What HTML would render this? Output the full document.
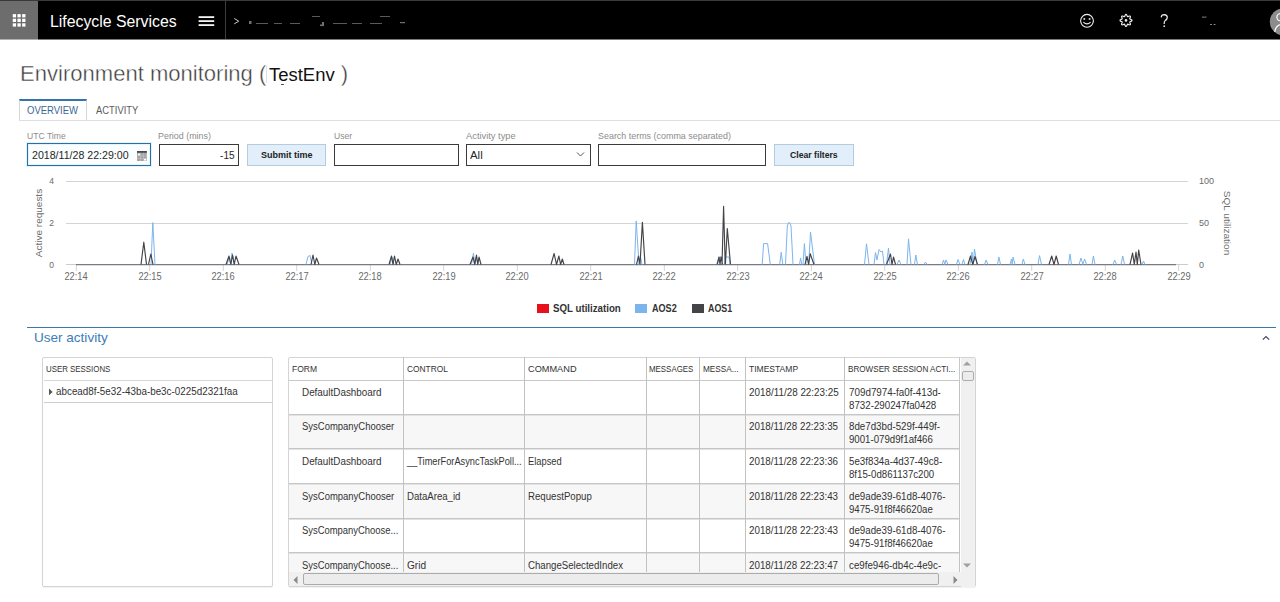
<!DOCTYPE html>
<html><head><meta charset="utf-8">
<style>
*{box-sizing:border-box;margin:0;padding:0}
html,body{width:1280px;height:602px;overflow:hidden;background:#fff;font-family:"Liberation Sans",sans-serif;position:relative}
.a{position:absolute;white-space:nowrap}
.t{line-height:1}
</style></head><body>
<div class="a" style="left:0.00px;top:0.00px;width:1280.00px;height:40.00px;background:#000"></div>
<div class="a" style="left:0.00px;top:0.00px;width:1280.00px;height:1.00px;background:#3a3a3a"></div>
<div class="a" style="left:0.00px;top:39.00px;width:1280.00px;height:1.00px;background:#7a7a7a"></div>
<div class="a" style="left:0.00px;top:1.00px;width:38.00px;height:38.00px;background:#6d6d6d"></div>
<div class="a" style="left:0.00px;top:39.00px;width:38.00px;height:1.00px;background:#b0b0b0"></div>
<svg class="a" style="left:0.00px;top:0.00px" width="38" height="39" viewBox="0 0 38 39"><g fill="#fff"><rect x="12.75" y="14.10" width="3.3" height="3.3"/><rect x="12.75" y="18.70" width="3.3" height="3.3"/><rect x="12.75" y="23.30" width="3.3" height="3.3"/><rect x="17.45" y="14.10" width="3.3" height="3.3"/><rect x="17.45" y="18.70" width="3.3" height="3.3"/><rect x="17.45" y="23.30" width="3.3" height="3.3"/><rect x="22.15" y="14.10" width="3.3" height="3.3"/><rect x="22.15" y="18.70" width="3.3" height="3.3"/><rect x="22.15" y="23.30" width="3.3" height="3.3"/></g></svg>
<svg class="a" style="left:198.00px;top:15.00px" width="17" height="12" viewBox="0 0 17 12"><g fill="#f2f2f2"><rect x="0.6" y="1.2" width="15.6" height="1.8"/><rect x="0.6" y="5.2" width="15.6" height="1.8"/><rect x="0.6" y="9.2" width="15.6" height="1.8"/></g></svg>
<div class="a" style="left:225.00px;top:1.00px;width:1.00px;height:38.00px;background:#3c3c3c"></div>
<svg class="a" style="left:233.00px;top:17.00px" width="8" height="9" viewBox="0 0 8 9"><path d="M1.2 1.5 L5.8 4.2 L1.2 6.9" fill="none" stroke="#c8c8c8" stroke-width="1"/></svg>
<svg class="a" style="left:245.00px;top:12.00px" width="170" height="16" viewBox="0 0 170 16"><g fill="#bdbdbd" opacity="0.6"><rect x="4.0" y="9.0" width="2.5" height="3.0"/><rect x="11.0" y="11.0" width="12.0" height="0.8"/><rect x="29.0" y="11.0" width="8.0" height="0.8"/><rect x="45.0" y="11.0" width="10.0" height="0.8"/><rect x="75.0" y="12.5" width="4.0" height="1.6"/><rect x="77.0" y="10.0" width="2.0" height="3.0"/><rect x="88.0" y="11.0" width="14.0" height="0.8"/><rect x="107.0" y="11.0" width="10.0" height="0.8"/><rect x="125.0" y="11.0" width="12.0" height="0.8"/><rect x="155.0" y="10.0" width="5.0" height="1.2"/><rect x="67.0" y="4.0" width="8.0" height="0.8"/><rect x="135.0" y="4.0" width="10.0" height="0.8"/></g></svg>
<svg class="a" style="left:1078.00px;top:12.00px" width="18" height="18" viewBox="0 0 18 18"><circle cx="9" cy="8.8" r="6.4" fill="none" stroke="#f0f0f0" stroke-width="1.1"/><circle cx="6.3" cy="6.9" r="0.95" fill="#f0f0f0"/><circle cx="11.6" cy="6.9" r="0.95" fill="#f0f0f0"/><path d="M5.4 10.2 Q9 13.6 12.6 10.2" fill="none" stroke="#f0f0f0" stroke-width="1.1"/></svg>
<svg class="a" style="left:1117.00px;top:12.00px" width="18" height="18" viewBox="0 0 18 18"><path d="M9.00 2.40 L9.38 2.54 L9.72 2.92 L9.99 3.45 L10.18 3.98 L10.36 4.40 L10.57 4.61 L10.87 4.61 L11.29 4.44 L11.81 4.20 L12.36 4.02 L12.87 3.98 L13.24 4.16 L13.42 4.53 L13.38 5.04 L13.20 5.59 L12.96 6.11 L12.79 6.53 L12.79 6.83 L13.00 7.04 L13.42 7.22 L13.95 7.41 L14.48 7.68 L14.86 8.02 L15.00 8.40 L14.86 8.78 L14.48 9.12 L13.95 9.39 L13.42 9.58 L13.00 9.76 L12.79 9.97 L12.79 10.27 L12.96 10.69 L13.20 11.21 L13.38 11.76 L13.42 12.27 L13.24 12.64 L12.87 12.82 L12.36 12.78 L11.81 12.60 L11.29 12.36 L10.87 12.19 L10.57 12.19 L10.36 12.40 L10.18 12.82 L9.99 13.35 L9.72 13.88 L9.38 14.26 L9.00 14.40 L8.62 14.26 L8.28 13.88 L8.01 13.35 L7.82 12.82 L7.64 12.40 L7.43 12.19 L7.13 12.19 L6.71 12.36 L6.19 12.60 L5.64 12.78 L5.13 12.82 L4.76 12.64 L4.58 12.27 L4.62 11.76 L4.80 11.21 L5.04 10.69 L5.21 10.27 L5.21 9.97 L5.00 9.76 L4.58 9.58 L4.05 9.39 L3.52 9.12 L3.14 8.78 L3.00 8.40 L3.14 8.02 L3.52 7.68 L4.05 7.41 L4.58 7.22 L5.00 7.04 L5.21 6.83 L5.21 6.53 L5.04 6.11 L4.80 5.59 L4.62 5.04 L4.58 4.53 L4.76 4.16 L5.13 3.98 L5.64 4.02 L6.19 4.20 L6.71 4.44 L7.13 4.61 L7.43 4.61 L7.64 4.40 L7.82 3.98 L8.01 3.45 L8.28 2.92 L8.62 2.54 L9.00 2.40 Z" fill="none" stroke="#f0f0f0" stroke-width="1.15" stroke-linejoin="round"/><circle cx="9" cy="8.4" r="1.3" fill="#f0f0f0"/></svg>
<svg class="a" style="left:1158.00px;top:12.00px" width="12" height="18" viewBox="0 0 12 18"><path d="M3.2 5.4 Q3.4 2.6 6.3 2.6 Q9.3 2.8 9.3 5.4 Q9.2 7.3 7.2 8.6 Q6.2 9.4 6.2 11.2 L6.2 12" fill="none" stroke="#f0f0f0" stroke-width="1.2"/><circle cx="6.2" cy="14.2" r="0.85" fill="#f0f0f0"/></svg>
<svg class="a" style="left:1200.00px;top:14.00px" width="60" height="20" viewBox="0 0 60 20"><g fill="#aaa" opacity="0.75"><rect x="2" y="2.6" width="4.5" height="1"/><rect x="10" y="10" width="2" height="1"/><rect x="13.5" y="10" width="2" height="1"/></g></svg>
<svg class="a" style="left:1266.00px;top:6.00px" width="14" height="32" viewBox="0 0 14 32"><circle cx="17.3" cy="15.8" r="13.5" fill="#8c8c8c"/><circle cx="14.5" cy="11.2" r="3.6" fill="none" stroke="#fff" stroke-width="1.2"/><path d="M8.7 25.8 Q10 19 15.5 18.4" fill="none" stroke="#fff" stroke-width="1.2"/></svg>
<div class="a" style="left:265.50px;top:66.00px;width:1.00px;height:17.00px;background:#e0e0e0"></div>
<div class="a" style="left:281.00px;top:84.00px;width:3.00px;height:1.00px;background:#555"></div>
<div class="a" style="left:19.00px;top:120.00px;width:1261.00px;height:1.00px;background:#dedede"></div>
<div class="a" style="left:19.00px;top:99.00px;width:68.00px;height:21.00px;background:#fff;border:1px solid #d6d6d6;border-top:2px solid #3574aa;border-bottom:none"></div>
<div class="a" style="left:27.00px;top:143.30px;width:124.00px;height:22.40px;background:#fbfeff;border:1px solid #2f6e9c;box-shadow:0 0 0 1px #e2f4fb, inset 0 0 0 1px #e4f4fb"></div>
<svg class="a" style="left:137.00px;top:150.50px" width="10" height="10.2" viewBox="0 0 10 10.2"><rect x="0" y="0" width="9.8" height="10" fill="#a4a4a4"/><rect x="0" y="0" width="9.8" height="1.8" fill="#4a4a4a"/><g fill="#c4c4c4"><rect x="0" y="4.6" width="9.8" height="0.6"/><rect x="0" y="7.2" width="9.8" height="0.6"/><rect x="3.2" y="1.8" width="0.6" height="8.2"/><rect x="6.3" y="1.8" width="0.6" height="8.2"/></g><rect x="1" y="2.6" width="2" height="1.7" fill="#fff"/><rect x="7" y="7.8" width="2.2" height="1.8" fill="#fff"/></svg>
<div class="a" style="left:158.75px;top:143.50px;width:80.00px;height:22.00px;background:#fff;border:1px solid #3a3a3a"></div>
<div class="a" style="left:247.00px;top:143.80px;width:79.30px;height:22.40px;background:#e2eefa;border:1px solid #b2cce0"></div>
<div class="a" style="left:334.25px;top:143.50px;width:124.50px;height:22.00px;background:#fff;border:1px solid #3a3a3a"></div>
<div class="a" style="left:466.25px;top:143.50px;width:124.25px;height:22.00px;background:#fff;border:1px solid #3a3a3a"></div>
<svg class="a" style="left:576.00px;top:151.00px" width="10" height="7" viewBox="0 0 10 7"><path d="M1 1.5 L4.5 5 L8 1.5" fill="none" stroke="#555" stroke-width="1"/></svg>
<div class="a" style="left:598.25px;top:143.50px;width:167.50px;height:22.00px;background:#fff;border:1px solid #3a3a3a"></div>
<div class="a" style="left:773.75px;top:143.80px;width:80.00px;height:22.40px;background:#e2eefa;border:1px solid #b2cce0"></div>
<div class="a" style="left:537.00px;top:304.00px;width:12.00px;height:9.00px;background:#e8101a"></div>
<div class="a" style="left:635.30px;top:304.00px;width:12.20px;height:9.00px;background:#7cb5ec"></div>
<div class="a" style="left:692.00px;top:304.00px;width:12.00px;height:9.00px;background:#434348"></div>
<div class="a" style="left:27.00px;top:326.80px;width:1249.00px;height:1.20px;background:#3a78a8"></div>
<svg class="a" style="left:1261.00px;top:334.00px" width="10" height="8" viewBox="0 0 10 8"><path d="M1.8 5.6 L5 2.5 L8.2 5.6" fill="none" stroke="#3d4a5a" stroke-width="1.2"/></svg>
<div class="a" style="left:42.00px;top:356.50px;width:230.50px;height:230.00px;background:#fff;border:1px solid #d4d4d4;border-radius:2px;box-shadow:0 1px 1px rgba(0,0,0,0.06)"></div>
<div class="a" style="left:43.50px;top:380.00px;width:228.00px;height:1.00px;background:#d8d8d8"></div>
<svg class="a" style="left:48.00px;top:388.00px" width="6" height="8" viewBox="0 0 6 8"><path d="M1 0.6 L4.6 3.9 L1 7.2 Z" fill="#555"/></svg>
<div class="a" style="left:43.50px;top:402.00px;width:228.00px;height:1.30px;background:#cdcdcd"></div>
<div class="a" style="left:288.00px;top:356.80px;width:687.50px;height:230.00px;background:#fff;border:1px solid #d4d4d4;border-radius:2px;box-shadow:0 1px 1px rgba(0,0,0,0.06)"></div>
<div class="a" style="left:289.00px;top:414.70px;width:670.40px;height:34.60px;background:#f7f7f7"></div>
<div class="a" style="left:289.00px;top:484.20px;width:670.40px;height:34.50px;background:#f7f7f7"></div>
<div class="a" style="left:289.00px;top:553.30px;width:670.40px;height:18.70px;background:#f7f7f7"></div>
<div class="a" style="left:289.00px;top:380.00px;width:670.40px;height:1.00px;background:#c8c8c8"></div>
<div class="a" style="left:289.00px;top:414.00px;width:670.40px;height:1.00px;background:#c6c6c6"></div>
<div class="a" style="left:289.00px;top:415.00px;width:670.40px;height:1.00px;background:#e2e2e2"></div>
<div class="a" style="left:289.00px;top:448.00px;width:670.40px;height:1.00px;background:#c6c6c6"></div>
<div class="a" style="left:289.00px;top:449.00px;width:670.40px;height:1.00px;background:#e2e2e2"></div>
<div class="a" style="left:289.00px;top:483.00px;width:670.40px;height:1.00px;background:#c6c6c6"></div>
<div class="a" style="left:289.00px;top:484.00px;width:670.40px;height:1.00px;background:#e2e2e2"></div>
<div class="a" style="left:289.00px;top:518.00px;width:670.40px;height:1.00px;background:#c6c6c6"></div>
<div class="a" style="left:289.00px;top:519.00px;width:670.40px;height:1.00px;background:#e2e2e2"></div>
<div class="a" style="left:289.00px;top:552.00px;width:670.40px;height:1.00px;background:#c6c6c6"></div>
<div class="a" style="left:289.00px;top:553.00px;width:670.40px;height:1.00px;background:#e2e2e2"></div>
<div class="a" style="left:403.00px;top:357.00px;width:1.00px;height:215.00px;background:#c2c2c2"></div>
<div class="a" style="left:524.00px;top:357.00px;width:1.00px;height:215.00px;background:#c2c2c2"></div>
<div class="a" style="left:646.00px;top:357.00px;width:1.00px;height:215.00px;background:#c2c2c2"></div>
<div class="a" style="left:699.00px;top:357.00px;width:1.00px;height:215.00px;background:#c2c2c2"></div>
<div class="a" style="left:745.00px;top:357.00px;width:1.00px;height:215.00px;background:#c2c2c2"></div>
<div class="a" style="left:844.00px;top:357.00px;width:1.00px;height:215.00px;background:#c2c2c2"></div>
<div class="a" style="left:959.00px;top:357.00px;width:1.00px;height:215.00px;background:#c2c2c2"></div>
<svg class="a" style="left:0;top:170px" width="1280" height="120" viewBox="0 170 1280 120">
<rect x="66" y="181.0" width="1122" height="1" fill="#d4d4d4"/>
<rect x="66" y="223.0" width="1122" height="1" fill="#d4d4d4"/>
<rect x="66" y="264" width="1122" height="1" fill="#cccccc"/>
<rect x="75.8" y="265" width="1" height="6" fill="#d4d4d4"/>
<rect x="149.2" y="265" width="1" height="6" fill="#d4d4d4"/>
<rect x="222.8" y="265" width="1" height="6" fill="#d4d4d4"/>
<rect x="296.2" y="265" width="1" height="6" fill="#d4d4d4"/>
<rect x="369.8" y="265" width="1" height="6" fill="#d4d4d4"/>
<rect x="443.2" y="265" width="1" height="6" fill="#d4d4d4"/>
<rect x="516.8" y="265" width="1" height="6" fill="#d4d4d4"/>
<rect x="590.2" y="265" width="1" height="6" fill="#d4d4d4"/>
<rect x="663.8" y="265" width="1" height="6" fill="#d4d4d4"/>
<rect x="737.2" y="265" width="1" height="6" fill="#d4d4d4"/>
<rect x="810.8" y="265" width="1" height="6" fill="#d4d4d4"/>
<rect x="884.2" y="265" width="1" height="6" fill="#d4d4d4"/>
<rect x="957.8" y="265" width="1" height="6" fill="#d4d4d4"/>
<rect x="1031.2" y="265" width="1" height="6" fill="#d4d4d4"/>
<rect x="1104.8" y="265" width="1" height="6" fill="#d4d4d4"/>
<rect x="1178.2" y="265" width="1" height="6" fill="#d4d4d4"/>
<path d="M76 264.5 L1176 264.5" stroke="#7a7a82" stroke-width="1.25"/>
<path d="M151.0 264.5 L152.8 222.6 L155.0 264.5 M227.0 264.5 L229.5 257.0 L230.8 264.5 L232.0 253.0 L235.0 264.5 M306.0 264.5 L308.0 256.5 L310.0 255.5 L312.0 264.5 M390.0 264.5 L392.0 257.0 L394.0 264.5 M471.5 264.5 L473.5 253.0 L474.8 264.5 L476.0 257.0 L478.0 264.5 M634.5 264.5 L636.2 220.9 L639.0 264.5 M639.0 264.5 L640.5 257.0 L642.0 264.5 M717.5 264.5 L719.5 257.0 L721.5 257.0 L722.5 264.5 M724.5 264.5 L725.5 257.0 L729.0 257.0 L730.0 264.5 M762.2 264.5 L763.6 243.6 L767.6 243.6 L770.3 264.5 M779.7 264.5 L781.2 252.3 L782.8 264.5 M785.5 264.5 L787.3 226.0 L788.5 222.7 L789.7 222.7 L791.0 226.0 L793.0 264.5 M799.5 264.5 L800.6 258.0 L801.7 264.5 M803.0 264.5 L804.4 243.6 L806.0 264.5 M808.7 264.5 L810.5 232.0 L814.5 264.5 M864.5 264.5 L866.5 243.8 L869.0 264.5 M874.0 264.5 L875.5 252.5 L877.0 260.0 L879.0 249.5 L881.0 252.0 L882.5 251.0 L884.0 264.5 M886.5 264.5 L888.5 248.0 L890.0 264.5 M897.0 264.5 L899.0 260.0 L901.0 264.5 M907.0 264.5 L908.5 238.8 L911.0 264.5 M914.5 264.5 L915.8 255.0 L917.5 264.5 M924.0 264.5 L925.5 262.0 L927.0 264.5 M942.0 264.5 L943.5 260.0 L944.8 264.5 L946.0 260.0 L948.0 264.5 M956.5 264.5 L958.0 259.5 L960.0 264.5 M962.0 264.5 L963.5 259.5 L965.0 264.5 M970.0 264.5 L972.0 252.0 L973.2 264.5 L974.5 249.0 L977.0 264.5 M984.5 264.5 L986.0 260.0 L988.0 264.5 M997.5 264.5 L998.9 257.0 L1000.5 264.5 M1010.0 264.5 L1011.5 259.0 L1012.2 264.5 L1013.0 257.0 L1015.0 264.5 M1022.0 264.5 L1023.3 259.0 L1025.0 264.5 M1038.0 264.5 L1039.5 255.6 L1041.5 264.5 M1068.5 264.5 L1070.0 254.0 L1071.5 264.5 M1079.0 264.5 L1081.0 258.0 L1082.8 264.5 L1084.6 259.0 L1086.5 264.5 M1092.0 264.5 L1093.4 256.0 L1095.0 264.5 M1113.0 264.5 L1114.7 260.0 L1116.5 264.5 M1121.0 264.5 L1122.8 256.0 L1124.5 264.5 M1142.0 264.5 L1143.5 261.0 L1145.0 264.5" fill="none" stroke="#7cb5ec" stroke-width="1.0" stroke-linejoin="round"/>
<path d="M141.0 264.5 L143.8 242.2 L146.5 264.5 M148.5 264.5 L150.8 254.0 L153.0 264.5 M226.0 264.5 L229.0 256.0 L230.8 264.5 L232.5 255.0 L234.2 264.5 L236.0 256.0 L239.0 264.5 M311.0 264.5 L313.0 255.0 L314.8 264.5 L316.5 258.0 L319.0 264.5 M389.0 264.5 L391.5 256.0 L393.0 264.5 L394.5 256.0 L396.2 264.5 L398.0 259.0 L400.0 264.5 M470.0 264.5 L473.0 257.0 L474.8 264.5 L476.5 255.0 L477.8 264.5 L479.0 257.0 L481.0 264.5 M551.0 264.5 L554.1 253.5 L556.5 264.5 L558.9 256.0 L560.6 264.5 L562.3 259.0 L564.0 264.5 M636.5 264.5 L638.5 256.0 L640.0 264.5 M640.0 264.5 L642.4 222.3 L645.0 264.5 M717.0 264.5 L719.0 257.0 L720.0 264.5 L721.0 257.0 L722.5 264.5 M722.0 264.5 L723.6 206.4 L725.2 264.5 M725.4 264.5 L727.3 228.5 L730.5 264.5 M805.0 264.5 L807.0 256.4 L808.6 264.5 L810.2 253.7 L814.0 264.5 M886.5 264.5 L890.5 254.0 L892.0 264.5 L893.5 257.0 L895.5 264.5 M968.0 264.5 L970.5 256.0 L972.8 264.5 L975.0 256.5 L977.5 264.5 M1049.0 264.5 L1051.7 256.0 L1054.0 264.5 L1056.2 256.0 L1058.5 264.5 M1130.0 264.5 L1132.6 253.0 L1134.3 264.5 L1136.0 252.0 L1137.3 264.5 L1138.7 250.0 L1141.0 264.5" fill="none" stroke="#434348" stroke-width="1.15" stroke-linejoin="round"/>
</svg>
<div class="a t" id="t0" style="top:13.76px;font-size:16.00px;color:#fff;left:49.70px;transform:scaleX(0.9892);transform-origin:0 0">Lifecycle Services</div>
<div class="a t" id="t1" style="top:63.38px;font-size:22.00px;color:#3a3a3a;-webkit-text-stroke:0.4px #fff;left:19.90px;transform:scaleX(1.0024);transform-origin:0 0">Environment monitoring (</div>
<div class="a t" id="t2" style="top:65.76px;font-size:18.00px;color:#111;left:269.30px;transform:scaleX(1.0257);transform-origin:0 0">TestEnv</div>
<div class="a t" id="t3" style="top:63.38px;font-size:22.00px;color:#3a3a3a;-webkit-text-stroke:0.4px #fff;left:340.70px">)</div>
<div class="a t" id="t4" style="top:106.23px;font-size:10.00px;color:#3c6894;left:27.20px;transform:scaleX(0.9505);transform-origin:0 0">OVERVIEW</div>
<div class="a t" id="t5" style="top:106.23px;font-size:10.00px;color:#5a5a5a;left:95.60px;transform:scaleX(0.9386);transform-origin:0 0">ACTIVITY</div>
<div class="a t" id="t6" style="top:130.95px;font-size:9.80px;color:#8c8c8c;left:26.50px;transform:scaleX(0.8774);transform-origin:0 0">UTC Time</div>
<div class="a t" id="t7" style="top:130.95px;font-size:9.80px;color:#8c8c8c;left:158.25px;transform:scaleX(0.9090);transform-origin:0 0">Period (mins)</div>
<div class="a t" id="t8" style="top:130.95px;font-size:9.80px;color:#8c8c8c;left:334.00px;transform:scaleX(0.8792);transform-origin:0 0">User</div>
<div class="a t" id="t9" style="top:130.95px;font-size:9.80px;color:#8c8c8c;left:465.90px;transform:scaleX(0.9515);transform-origin:0 0">Activity type</div>
<div class="a t" id="t10" style="top:130.95px;font-size:9.80px;color:#8c8c8c;left:597.75px;transform:scaleX(0.9112);transform-origin:0 0">Search terms (comma separated)</div>
<div class="a t" id="t11" style="top:150.47px;font-size:11.50px;color:#262626;left:31.80px;transform:scaleX(0.9229);transform-origin:0 0">2018/11/28 22:29:00</div>
<div class="a t" id="t12" style="top:150.02px;font-size:11.50px;color:#262626;right:1045.55px;transform:scaleX(0.8755);transform-origin:right center">-15</div>
<div class="a t" id="t13" style="top:150.36px;font-size:9.50px;color:#222;font-weight:bold;left:260.60px;transform:scaleX(0.9475);transform-origin:0 0">Submit time</div>
<div class="a t" id="t14" style="top:150.02px;font-size:11.50px;color:#262626;left:470.25px;transform:scaleX(0.9906);transform-origin:0 0">All</div>
<div class="a t" id="t15" style="top:150.36px;font-size:9.50px;color:#222;font-weight:bold;left:789.50px;transform:scaleX(0.9122);transform-origin:0 0">Clear filters</div>
<div class="a t" id="t16" style="top:304.04px;font-size:10.00px;color:#333;font-weight:bold;left:552.90px;transform:scaleX(0.9706);transform-origin:0 0">SQL utilization</div>
<div class="a t" id="t17" style="top:304.04px;font-size:10.00px;color:#333;font-weight:bold;left:651.50px;transform:scaleX(0.9079);transform-origin:0 0">AOS2</div>
<div class="a t" id="t18" style="top:304.04px;font-size:10.00px;color:#333;font-weight:bold;left:708.00px;transform:scaleX(0.8890);transform-origin:0 0">AOS1</div>
<div class="a t" id="t19" style="top:331.36px;font-size:13.40px;color:#3d7db5;left:34.40px;transform:scaleX(1.0104);transform-origin:0 0">User activity</div>
<div class="a t" id="t20" style="top:363.70px;font-size:9.80px;color:#333;left:45.70px;transform:scaleX(0.8044);transform-origin:0 0">USER SESSIONS</div>
<div class="a t" id="t21" style="top:387.04px;font-size:10.00px;color:#333;left:56.10px;transform:scaleX(0.9847);transform-origin:0 0">abcead8f-5e32-43ba-be3c-0225d2321faa</div>
<div class="a t" id="t22" style="top:363.90px;font-size:9.80px;color:#333;left:291.70px;transform:scaleX(0.8696);transform-origin:0 0">FORM</div>
<div class="a t" id="t23" style="top:363.90px;font-size:9.80px;color:#333;left:406.60px;transform:scaleX(0.8552);transform-origin:0 0">CONTROL</div>
<div class="a t" id="t24" style="top:363.90px;font-size:9.80px;color:#333;left:528.00px;transform:scaleX(0.9387);transform-origin:0 0">COMMAND</div>
<div class="a t" id="t25" style="top:363.90px;font-size:9.80px;color:#333;left:649.20px;transform:scaleX(0.8060);transform-origin:0 0">MESSAGES</div>
<div class="a t" id="t26" style="top:363.90px;font-size:9.80px;color:#333;left:703.00px;transform:scaleX(0.8396);transform-origin:0 0">MESSA...</div>
<div class="a t" id="t27" style="top:363.90px;font-size:9.80px;color:#333;left:749.00px;transform:scaleX(0.8697);transform-origin:0 0">TIMESTAMP</div>
<div class="a t" id="t28" style="top:363.90px;font-size:9.80px;color:#333;left:848.00px;transform:scaleX(0.8286);transform-origin:0 0">BROWSER SESSION ACTI...</div>
<div class="a t" id="t29" style="top:387.94px;font-size:10.00px;color:#333;left:302.00px;transform:scaleX(0.9867);transform-origin:0 0">DefaultDashboard</div>
<div class="a t" id="t30" style="top:387.94px;font-size:10.00px;color:#333;left:748.90px;transform:scaleX(0.9865);transform-origin:0 0">2018/11/28 22:23:25</div>
<div class="a t" id="t31" style="top:387.94px;font-size:10.00px;color:#333;left:848.50px;transform:scaleX(0.9836);transform-origin:0 0">709d7974-fa0f-413d-</div>
<div class="a t" id="t32" style="top:400.74px;font-size:10.00px;color:#333;left:848.50px;transform:scaleX(0.9749);transform-origin:0 0">8732-290247fa0428</div>
<div class="a t" id="t33" style="top:422.24px;font-size:10.00px;color:#333;left:302.00px;transform:scaleX(0.9475);transform-origin:0 0">SysCompanyChooser</div>
<div class="a t" id="t34" style="top:422.24px;font-size:10.00px;color:#333;left:748.90px;transform:scaleX(0.9780);transform-origin:0 0">2018/11/28 22:23:35</div>
<div class="a t" id="t35" style="top:422.24px;font-size:10.00px;color:#333;left:848.50px;transform:scaleX(0.9750);transform-origin:0 0">8de7d3bd-529f-449f-</div>
<div class="a t" id="t36" style="top:435.04px;font-size:10.00px;color:#333;left:848.50px;transform:scaleX(0.9660);transform-origin:0 0">9001-079d9f1af466</div>
<div class="a t" id="t37" style="top:456.84px;font-size:10.00px;color:#333;left:302.00px;transform:scaleX(0.9867);transform-origin:0 0">DefaultDashboard</div>
<div class="a t" id="t38" style="top:456.84px;font-size:10.00px;color:#333;left:406.50px;transform:scaleX(0.9237);transform-origin:0 0">__TimerForAsyncTaskPoll...</div>
<div class="a t" id="t39" style="top:456.84px;font-size:10.00px;color:#333;left:527.90px;transform:scaleX(0.9309);transform-origin:0 0">Elapsed</div>
<div class="a t" id="t40" style="top:456.84px;font-size:10.00px;color:#333;left:748.90px;transform:scaleX(0.9780);transform-origin:0 0">2018/11/28 22:23:36</div>
<div class="a t" id="t41" style="top:456.84px;font-size:10.00px;color:#333;left:848.50px;transform:scaleX(0.9750);transform-origin:0 0">5e3f834a-4d37-49c8-</div>
<div class="a t" id="t42" style="top:469.64px;font-size:10.00px;color:#333;left:848.50px;transform:scaleX(0.9660);transform-origin:0 0">8f15-0d861137c200</div>
<div class="a t" id="t43" style="top:491.74px;font-size:10.00px;color:#333;left:302.00px;transform:scaleX(0.9475);transform-origin:0 0">SysCompanyChooser</div>
<div class="a t" id="t44" style="top:491.74px;font-size:10.00px;color:#333;left:406.50px;transform:scaleX(0.9600);transform-origin:0 0">DataArea_id</div>
<div class="a t" id="t45" style="top:491.74px;font-size:10.00px;color:#333;left:527.90px;transform:scaleX(0.9637);transform-origin:0 0">RequestPopup</div>
<div class="a t" id="t46" style="top:491.74px;font-size:10.00px;color:#333;left:748.90px;transform:scaleX(0.9780);transform-origin:0 0">2018/11/28 22:23:43</div>
<div class="a t" id="t47" style="top:491.74px;font-size:10.00px;color:#333;left:848.50px;transform:scaleX(0.9750);transform-origin:0 0">de9ade39-61d8-4076-</div>
<div class="a t" id="t48" style="top:504.54px;font-size:10.00px;color:#333;left:848.50px;transform:scaleX(0.9660);transform-origin:0 0">9475-91f8f46620ae</div>
<div class="a t" id="t49" style="top:526.24px;font-size:10.00px;color:#333;left:302.00px;transform:scaleX(0.9420);transform-origin:0 0">SysCompanyChoose...</div>
<div class="a t" id="t50" style="top:526.24px;font-size:10.00px;color:#333;left:748.90px;transform:scaleX(0.9780);transform-origin:0 0">2018/11/28 22:23:43</div>
<div class="a t" id="t51" style="top:526.24px;font-size:10.00px;color:#333;left:848.50px;transform:scaleX(0.9750);transform-origin:0 0">de9ade39-61d8-4076-</div>
<div class="a t" id="t52" style="top:539.03px;font-size:10.00px;color:#333;left:848.50px;transform:scaleX(0.9660);transform-origin:0 0">9475-91f8f46620ae</div>
<div class="a t" id="t53" style="top:560.83px;font-size:10.00px;color:#333;left:302.00px;transform:scaleX(0.9420);transform-origin:0 0">SysCompanyChoose...</div>
<div class="a t" id="t54" style="top:560.83px;font-size:10.00px;color:#333;left:406.50px;transform:scaleX(1.0107);transform-origin:0 0">Grid</div>
<div class="a t" id="t55" style="top:560.83px;font-size:10.00px;color:#333;left:527.90px;transform:scaleX(0.9649);transform-origin:0 0">ChangeSelectedIndex</div>
<div class="a t" id="t56" style="top:560.83px;font-size:10.00px;color:#333;left:748.90px;transform:scaleX(0.9780);transform-origin:0 0">2018/11/28 22:23:47</div>
<div class="a t" id="t57" style="top:560.83px;font-size:10.00px;color:#333;left:848.50px;transform:scaleX(0.9750);transform-origin:0 0">ce9fe946-db4c-4e9c-</div>
<div class="a t" id="t58" style="top:272.14px;font-size:10.00px;color:#6a6a6a;left:76.25px;transform:translateX(-50%) scaleX(0.9286)">22:14</div>
<div class="a t" id="t59" style="top:272.14px;font-size:10.00px;color:#6a6a6a;left:149.75px;transform:translateX(-50%) scaleX(0.9286)">22:15</div>
<div class="a t" id="t60" style="top:272.14px;font-size:10.00px;color:#6a6a6a;left:223.25px;transform:translateX(-50%) scaleX(0.9286)">22:16</div>
<div class="a t" id="t61" style="top:272.14px;font-size:10.00px;color:#6a6a6a;left:296.75px;transform:translateX(-50%) scaleX(0.9286)">22:17</div>
<div class="a t" id="t62" style="top:272.14px;font-size:10.00px;color:#6a6a6a;left:370.25px;transform:translateX(-50%) scaleX(0.9286)">22:18</div>
<div class="a t" id="t63" style="top:272.14px;font-size:10.00px;color:#6a6a6a;left:443.75px;transform:translateX(-50%) scaleX(0.9286)">22:19</div>
<div class="a t" id="t64" style="top:272.14px;font-size:10.00px;color:#6a6a6a;left:517.25px;transform:translateX(-50%) scaleX(0.9286)">22:20</div>
<div class="a t" id="t65" style="top:272.14px;font-size:10.00px;color:#6a6a6a;left:590.75px;transform:translateX(-50%) scaleX(0.9286)">22:21</div>
<div class="a t" id="t66" style="top:272.14px;font-size:10.00px;color:#6a6a6a;left:664.25px;transform:translateX(-50%) scaleX(0.9286)">22:22</div>
<div class="a t" id="t67" style="top:272.14px;font-size:10.00px;color:#6a6a6a;left:737.75px;transform:translateX(-50%) scaleX(0.9286)">22:23</div>
<div class="a t" id="t68" style="top:272.14px;font-size:10.00px;color:#6a6a6a;left:811.25px;transform:translateX(-50%) scaleX(0.9286)">22:24</div>
<div class="a t" id="t69" style="top:272.14px;font-size:10.00px;color:#6a6a6a;left:884.75px;transform:translateX(-50%) scaleX(0.9286)">22:25</div>
<div class="a t" id="t70" style="top:272.14px;font-size:10.00px;color:#6a6a6a;left:958.25px;transform:translateX(-50%) scaleX(0.9286)">22:26</div>
<div class="a t" id="t71" style="top:272.14px;font-size:10.00px;color:#6a6a6a;left:1031.75px;transform:translateX(-50%) scaleX(0.9286)">22:27</div>
<div class="a t" id="t72" style="top:272.14px;font-size:10.00px;color:#6a6a6a;left:1105.25px;transform:translateX(-50%) scaleX(0.9286)">22:28</div>
<div class="a t" id="t73" style="top:272.14px;font-size:10.00px;color:#6a6a6a;left:1178.75px;transform:translateX(-50%) scaleX(0.9286)">22:29</div>
<div class="a t" id="t74" style="top:177.05px;font-size:8.50px;color:#6a6a6a;left:51.60px;transform:translateX(-50%) ">4</div>
<div class="a t" id="t75" style="top:219.05px;font-size:8.50px;color:#6a6a6a;left:51.60px;transform:translateX(-50%) ">2</div>
<div class="a t" id="t76" style="top:260.55px;font-size:8.50px;color:#6a6a6a;left:51.60px;transform:translateX(-50%) ">0</div>
<div class="a t" id="t77" style="top:177.38px;font-size:9.00px;color:#6a6a6a;left:1199.00px">100</div>
<div class="a t" id="t78" style="top:219.38px;font-size:9.00px;color:#6a6a6a;left:1199.00px">50</div>
<div class="a t" id="t79" style="top:260.88px;font-size:9.00px;color:#6a6a6a;left:1199.00px">0</div>
<div class="a" style="top:222.80px;left:39.50px;font-size:9.30px;color:#6e6e6e;width:0;height:0"><div class="t" id="t80" style="position:absolute;left:0;top:0;transform:translate(-50%,-50%) rotate(-90deg) scaleX(1.0745);white-space:nowrap">Active requests</div></div>
<div class="a" style="top:223.10px;left:1225.80px;font-size:9.30px;color:#6e6e6e;width:0;height:0"><div class="t" id="t81" style="position:absolute;left:0;top:0;transform:translate(-50%,-50%) rotate(90deg) scaleX(1.0830);white-space:nowrap">SQL utilization</div></div>
<div class="a" style="left:959.00px;top:357.00px;width:1.00px;height:23.50px;background:#c8c8c8"></div>
<div class="a" style="left:960.60px;top:357.50px;width:14.20px;height:229.00px;background:#f0f0f0"></div>
<svg class="a" style="left:962.00px;top:359.50px" width="10" height="7" viewBox="0 0 10 7"><path d="M1 5.5 L5 1.5 L9 5.5 Z" fill="#a0a0a0"/></svg>
<div class="a" style="left:961.50px;top:371.30px;width:12.30px;height:9.50px;background:#ececec;border:1px solid #ababab;border-radius:2px"></div>
<svg class="a" style="left:962.00px;top:561.50px" width="10" height="7" viewBox="0 0 10 7"><path d="M1 1.5 L5 5.5 L9 1.5 Z" fill="#a0a0a0"/></svg>
<div class="a" style="left:289.00px;top:572.20px;width:686.00px;height:14.30px;background:#f0f0f0"></div>
<svg class="a" style="left:291.50px;top:574.50px" width="7" height="10" viewBox="0 0 7 10"><path d="M5.5 1 L1.5 5 L5.5 9 Z" fill="#8a8a8a"/></svg>
<div class="a" style="left:302.50px;top:572.50px;width:636.30px;height:12.30px;background:#ececec;border:1px solid #ababab;border-radius:2px"></div>
<svg class="a" style="left:952.00px;top:574.50px" width="7" height="10" viewBox="0 0 7 10"><path d="M1.5 1 L5.5 5 L1.5 9 Z" fill="#8a8a8a"/></svg>
</body></html>
